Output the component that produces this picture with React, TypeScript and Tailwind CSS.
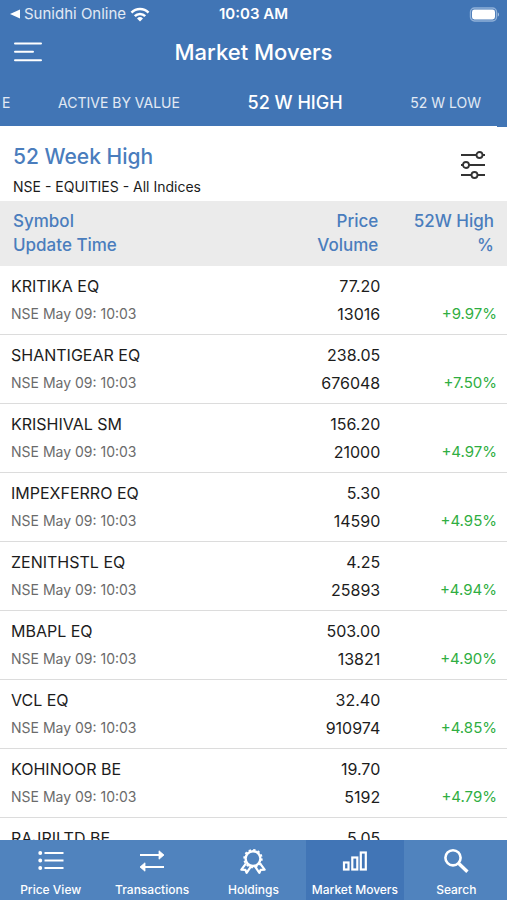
type Mover = {
  symbol: string;
  time: string;
  price: string;
  volume: string;
  change: string;
};

const movers: Mover[] = [
  { symbol: "KRITIKA EQ", time: "NSE May 09: 10:03", price: "77.20", volume: "13016", change: "+9.97%" },
  { symbol: "SHANTIGEAR EQ", time: "NSE May 09: 10:03", price: "238.05", volume: "676048", change: "+7.50%" },
  { symbol: "KRISHIVAL SM", time: "NSE May 09: 10:03", price: "156.20", volume: "21000", change: "+4.97%" },
  { symbol: "IMPEXFERRO EQ", time: "NSE May 09: 10:03", price: "5.30", volume: "14590", change: "+4.95%" },
  { symbol: "ZENITHSTL EQ", time: "NSE May 09: 10:03", price: "4.25", volume: "25893", change: "+4.94%" },
  { symbol: "MBAPL EQ", time: "NSE May 09: 10:03", price: "503.00", volume: "13821", change: "+4.90%" },
  { symbol: "VCL EQ", time: "NSE May 09: 10:03", price: "32.40", volume: "910974", change: "+4.85%" },
  { symbol: "KOHINOOR BE", time: "NSE May 09: 10:03", price: "19.70", volume: "5192", change: "+4.79%" },
  { symbol: "RAJRILTD BE", time: "", price: "5.05", volume: "", change: "" },
];

function StatusBar() {
  return (
    <div className="grid h-7 grid-cols-[1fr_auto_1fr] items-center px-2 text-[15px] leading-5">
      <div className="flex items-center text-white/85">
        <svg viewBox="0 0 16 16" className="h-4 w-4 fill-white">
          <path d="M2 8 12 3.6v8.8Z" />
        </svg>
        <span>Sunidhi Online</span>
        <svg viewBox="0 0 20 15" className="ml-1 h-[15px] w-5 fill-none stroke-white" strokeWidth="2.6">
          <path d="M1.5 5.6a12 12 0 0 1 17 0" />
          <path d="M4.8 9.1a7.4 7.4 0 0 1 10.4 0" />
          <path d="M10 14.6 7 11.5a4.3 4.3 0 0 1 6 0Z" className="fill-white" stroke="none" />
        </svg>
      </div>
      <span className="font-semibold">10:03 AM</span>
      <svg viewBox="0 0 30 15" className="h-[15px] w-[30px] justify-self-end">
        <rect x="1.5" y="1" width="26" height="13" rx="4" fill="none" stroke="#8fb0d8" strokeWidth="1.4" />
        <rect x="3" y="2.5" width="23" height="10" rx="2.4" fill="#fff" />
        <path d="M28.8 5.4v4.2c1.6-.7 1.6-3.5 0-4.2Z" fill="#a9c2e0" />
      </svg>
    </div>
  );
}

function Header() {
  return (
    <header className="shrink-0 bg-[#4175b5] text-white">
      <StatusBar />
      <div className="grid h-12 grid-cols-[1fr_auto_1fr] items-center px-[14px]">
        <button aria-label="Menu" className="justify-self-start">
          <svg viewBox="0 0 28 20" className="h-5 w-7 stroke-white" strokeWidth="2" strokeLinecap="round">
            <path d="M1 1.5h26M1 9.8h18M1 18.2h26" />
          </svg>
        </button>
        <h1 className="text-[22px] font-medium leading-8">Market Movers</h1>
      </div>
      <div className="flex h-[50px] items-center justify-between overflow-hidden pl-[2px] pr-[26px] pt-1 text-sm">
        <button className="text-white/85">E</button>
        <button className="-ml-5 text-white/85">ACTIVE BY VALUE</button>
        <button className="text-lg font-medium">52 W HIGH</button>
        <button className="text-white/85">52 W LOW</button>
      </div>
      <div className="mr-[10px] h-px bg-white" />
    </header>
  );
}

function MoversTable() {
  return (
    <table className="w-full table-fixed">
      <thead className="bg-[#ebebeb] text-[17px] font-medium leading-6 text-[#4a7dbd]">
        <tr>
          <th className="w-1/2 pb-[9px] pl-[13px] pt-2 text-left font-medium">
            Symbol
            <br />
            Update Time
          </th>
          <th className="w-1/4 pb-[9px] pr-[2px] pt-2 text-right font-medium">
            Price
            <br />
            Volume
          </th>
          <th className="w-1/4 pb-[9px] pr-[13px] pt-2 text-right font-medium">
            52W High
            <br />%
          </th>
        </tr>
      </thead>
      <tbody className="text-base leading-7 text-[#1c1c1c]">
        {movers.map((mover) => (
          <tr key={mover.symbol} className="border-b border-[#dcdcdc]">
            <td className="py-[6px] pl-[11px]">
              <div>{mover.symbol}</div>
              <div className="text-sm leading-7 text-[#6b6b6b]">{mover.time}</div>
            </td>
            <td className="py-[6px] text-right align-top">
              <div>{mover.price}</div>
              <div>{mover.volume}</div>
            </td>
            <td className="py-[6px] pr-[10px] text-right align-bottom text-[15px] leading-7 text-[#2fae42]">
              {mover.change}
            </td>
          </tr>
        ))}
      </tbody>
    </table>
  );
}

const navItems = [
  {
    label: "Price View",
    icon: (
      <>
        <path d="M7.5 4H26.5M7.5 11.5H26.5M7.5 19H26.5" />
        <path d="M3.2 4h.1M3.2 11.5h.1M3.2 19h.1" strokeWidth="3.8" strokeLinecap="round" />
      </>
    ),
  },
  {
    label: "Transactions",
    icon: (
      <>
        <path d="M2 6h20M6 18h20" />
        <path d="M21 1.8 26 6l-5 4.2ZM7 13.8 2 18l5 4.2Z" fill="currentColor" strokeWidth="0.8" />
      </>
    ),
  },
  {
    label: "Holdings",
    icon: (
      <>
        <circle cx="14" cy="9.6" r="7.4" strokeWidth="2.4" />
        <circle cx="14" cy="9.6" r="8.8" strokeWidth="1.8" strokeDasharray="2.3 2.3" />
        <path d="m7 14.4-4.6 6.2 4 .2 1.2 3 4.4-6.4M21 14.4l4.6 6.2-4 .2-1.2 3-4.4-6.4" strokeLinejoin="round" />
      </>
    ),
  },
  {
    label: "Market Movers",
    icon: (
      <>
        <rect x="3" y="13.5" width="4.5" height="7" />
        <rect x="11.3" y="8.5" width="5" height="12" />
        <rect x="19.8" y="3.5" width="5" height="17" />
      </>
    ),
  },
  {
    label: "Search",
    icon: (
      <>
        <circle cx="11" cy="8.8" r="7.6" strokeWidth="2.6" />
        <path d="m16.8 14.6 8.6 8.2" strokeWidth="3.4" />
      </>
    ),
  },
];

function BottomNav() {
  return (
    <nav className="grid h-[60px] shrink-0 grid-cols-5 bg-[#5083be] text-white">
      {navItems.map((item) => (
        <button
          key={item.label}
          className={
            "mx-[2px] flex flex-col items-center justify-end gap-[7px] whitespace-nowrap text-xs font-medium leading-5 " +
            (item.label === "Market Movers" ? "bg-[#4175b6]" : "")
          }>
          <svg
            viewBox="0 0 28 24"
            className="h-6 w-7 shrink-0 overflow-visible fill-none stroke-current"
            strokeWidth="2.2">
            {item.icon}
          </svg>
          <span>{item.label}</span>
        </button>
      ))}
    </nav>
  );
}

export default function App() {
  return (
    <div className="flex h-screen flex-col overflow-hidden bg-white font-['Inter',sans-serif]">
      <Header />
      <main className="min-h-0 flex-1 overflow-hidden">
        <div className="flex items-start justify-between pb-[2px] pl-[13px] pr-[22px] pt-4">
          <div>
            <h2 className="text-[21px] font-medium leading-7 text-[#4a7dbd]">52 Week High</h2>
            <p className="pt-1 text-sm leading-6 text-[#1c1c1c]">NSE - EQUITIES - All Indices</p>
          </div>
          <button aria-label="Filter" className="mt-2">
            <svg viewBox="0 0 24 28" className="h-7 w-6 fill-white stroke-[#333]" strokeWidth="1.8">
              <path d="M0 4h24M0 14h24M0 24h24" />
              <circle cx="18.5" cy="4" r="3" />
              <circle cx="5" cy="14" r="3" />
              <circle cx="13.5" cy="24" r="3" />
            </svg>
          </button>
        </div>
        <MoversTable />
      </main>
      <BottomNav />
    </div>
  );
}
